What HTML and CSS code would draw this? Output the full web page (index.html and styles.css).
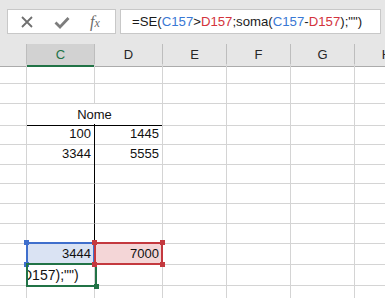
FILE: index.html
```html
<!DOCTYPE html>
<html lang="pt">
<head>
    <meta charset="UTF-8">
    <title>Planilha</title>
    <link rel="stylesheet" href="styles.css">
</head>
<body>
    <div class="toolbar">
        <div class="fx-box">
            <svg class="icon" width="14" height="14" viewBox="0 0 14 14">
                <path d="M2 2 L12 12 M12 2 L2 12" stroke="#6f6f6f" stroke-width="1.8" fill="none"/>
            </svg>
            <svg class="icon" width="16" height="14" viewBox="0 0 16 14">
                <path d="M1.5 7.5 L6 12 L14.5 3" stroke="#7d7d7d" stroke-width="2.8" fill="none"/>
            </svg>
            <span class="fx">f<span class="fx-x">x</span></span>
        </div>
        <div class="formula">=SE(<span class="ref-b">C157</span>&gt;<span class="ref-r">D157</span>;soma(<span class="ref-b">C157</span>-<span class="ref-r">D157</span>);"")</div>
    </div>

    <div class="sheet">
        <div class="row head">
            <div class="hcell"></div>
            <div class="hcell selected">C</div>
            <div class="hcell">D</div>
            <div class="hcell">E</div>
            <div class="hcell">F</div>
            <div class="hcell">G</div>
            <div class="hcell">H</div>
        </div>
        <div class="row"><div></div><div></div><div></div><div></div><div></div><div></div><div></div></div>
        <div class="row"><div></div><div></div><div></div><div></div><div></div><div></div><div></div></div>
        <div class="row">
            <div></div>
            <div class="title">Nome</div>
            <div></div><div></div><div></div><div></div>
        </div>
        <div class="row">
            <div></div><div class="num split">100</div><div class="num">1445</div><div></div><div></div><div></div><div></div>
        </div>
        <div class="row">
            <div></div><div class="num split">3344</div><div class="num">5555</div><div></div><div></div><div></div><div></div>
        </div>
        <div class="row"><div></div><div class="split"></div><div></div><div></div><div></div><div></div><div></div></div>
        <div class="row"><div></div><div class="split"></div><div></div><div></div><div></div><div></div><div></div></div>
        <div class="row"><div></div><div class="split"></div><div></div><div></div><div></div><div></div><div></div></div>
        <div class="row"><div></div><div class="split"></div><div></div><div></div><div></div><div></div><div></div></div>
        <div class="row">
            <div></div>
            <div class="num pick-b">3444
                <span class="frame"><i class="h tl"></i><i class="h bl"></i></span>
            </div>
            <div class="num pick-r">7000
                <span class="frame"><i class="h tl"></i><i class="h tr"></i><i class="h bl"></i><i class="h br"></i></span>
            </div>
            <div></div><div></div><div></div><div></div>
        </div>
        <div class="row">
            <div></div>
            <div class="editing"><span class="edit-text">D157);"")</span>
                <span class="frame"><i class="h br"></i></span>
            </div>
            <div></div><div></div><div></div><div></div><div></div>
        </div>
        <div class="row"><div></div><div></div><div></div><div></div><div></div><div></div><div></div></div>
    </div>
</body>
</html>
```

FILE: styles.css
```css
html, body {
    margin: 0;
    height: 298px;
    overflow: hidden;
    background: #fff;
    font-family: "Liberation Sans", Arial, sans-serif;
}

.toolbar {
    display: flex;
    height: 44px;
    box-sizing: border-box;
    padding: 9px 0 0 7px;
    background: #e6e6e6;
}

.fx-box {
    display: flex;
    align-items: center;
    width: 109px;
    height: 25px;
    box-sizing: border-box;
    background: #fff;
    border: 1px solid #c8c8c8;
    padding-left: 12px;
}

.icon {
    display: block;
}

.icon + .icon {
    margin-left: 20px;
}

.fx {
    margin-left: 20px;
    font-family: "Liberation Serif", serif;
    font-style: italic;
    font-size: 16px;
    color: #6c6c6c;
}

.fx-x {
    font-size: 12px;
}

.formula {
    margin-left: 4px;
    width: 261px;
    flex-shrink: 0;
    height: 25px;
    box-sizing: border-box;
    background: #fff;
    border: 1px solid #c8c8c8;
    padding-left: 11px;
    font-size: 13.2px;
    line-height: 24px;
    color: #1a1a1a;
    white-space: nowrap;
}

.ref-b { color: #3a78d4; }
.ref-r { color: #d3343c; }

.sheet {
    width: 419px;
}

.row {
    display: grid;
    grid-template-columns: 27px 68px 68px 64px 64px 64px 64px;
    height: 20px;
}

.row > div {
    position: relative;
    box-sizing: border-box;
    border-right: 1px solid #d4d4d4;
    border-bottom: 1px solid #d4d4d4;
    font-size: 13px;
    line-height: 20px;
    color: #111;
}

.row.head > div {
    background: #e6e6e6;
    border-right: 1px solid #bdbdbd;
    border-bottom: 1px solid #ababab;
    text-align: center;
    color: #262626;
    line-height: 21px;
}

.row.head > .selected {
    background: #d2d2d2;
    border-bottom: 2px solid #217346;
    color: #217346;
}

.row > .title {
    grid-column: span 2;
    text-align: center;
    border-bottom: 1px solid #000;
    line-height: 21px;
}

.row > .num {
    text-align: right;
    padding-right: 3px;
}

.row > .split {
    border-right: 1px solid #000;
}

.frame {
    position: absolute;
    top: -2px;
    left: -1px;
    right: -1px;
    bottom: -1px;
    border: 2px solid;
    z-index: 1;
}

.h {
    position: absolute;
    width: 5px;
    height: 5px;
    background: currentColor;
}

.tl { top: -4px; left: -4px; }
.tr { top: -4px; right: -4px; }
.bl { bottom: -4px; left: -4px; }
.br { bottom: -4px; right: -4px; }

.row > .pick-b {
    background: #dae3f3;
}

.pick-b .frame {
    color: #3f6fcc;
    border-color: #3f6fcc;
}

.row > .pick-r {
    background: #f4d6d7;
}

.pick-r .frame {
    color: #c4393f;
    border-color: #c4393f;
    z-index: 2;
}

.edit-text {
    display: block;
    overflow: hidden;
    white-space: nowrap;
    text-indent: -5px;
    padding-top: 1px;
    font-size: 14px;
    line-height: 20px;
}

.editing .frame {
    top: -1px;
    right: -3px;
    bottom: -2px;
    color: #217346;
    border-color: #217346;
}
```
